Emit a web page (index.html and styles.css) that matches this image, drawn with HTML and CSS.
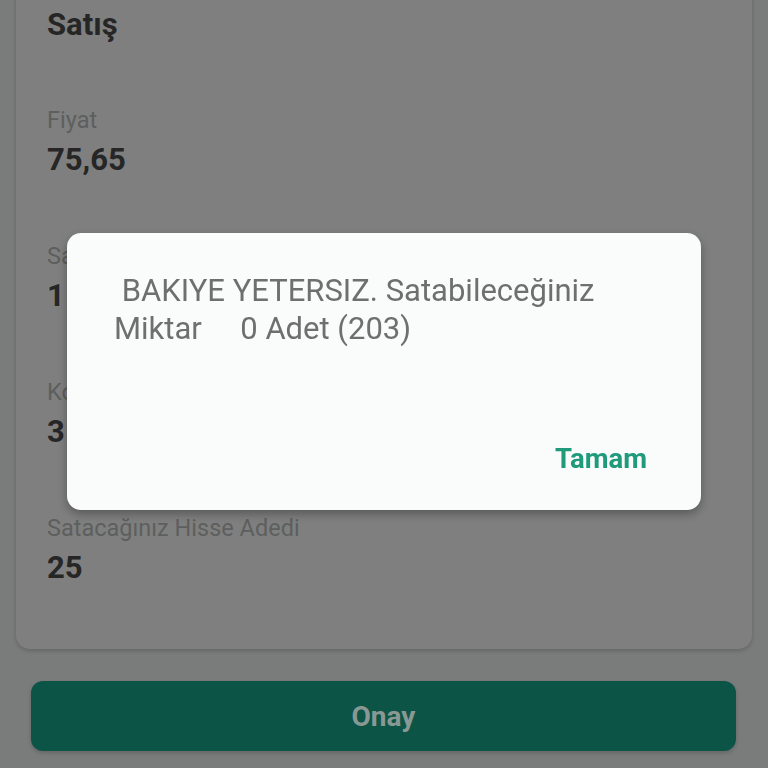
FILE: index.html
```html
<!DOCTYPE html>
<html lang="tr">
<head>
<meta charset="utf-8">
<title>Satış</title>
<link rel="stylesheet" href="styles.css">
</head>
<body>
<main class="page">
  <section class="card">
    <h1 class="title">Satış</h1>
    <div class="field">
      <div class="label">Fiyat</div>
      <div class="value">75,65</div>
    </div>
    <div class="field">
      <div class="label">Satılabilir Adet</div>
      <div class="value">1</div>
    </div>
    <div class="field">
      <div class="label">Komisyon</div>
      <div class="value">3</div>
    </div>
    <div class="field">
      <div class="label">Satacağınız Hisse Adedi</div>
      <div class="value">25</div>
    </div>
  </section>
  <button class="confirm">Onay</button>
</main>
<div class="scrim">
  <div class="dialog">
    <p class="message"> BAKIYE YETERSIZ. Satabileceğiniz Miktar     0 Adet (203)</p>
    <div class="actions"><button class="ok">Tamam</button></div>
  </div>
</div>
</body>
</html>
```
FILE: styles.css
```css
* { box-sizing: border-box; }
html, body { margin: 0; padding: 0; }
body {
  background: #7a7c7b;
  font-family: Roboto, "Noto Sans", "Liberation Sans", sans-serif;
  height: 768px;
  overflow: hidden;
}
.page {
  padding: 0 16px;
  margin-top: -24px;
  display: flex;
  flex-direction: column;
}
.card {
  background: #7f7f7f;
  border-radius: 14px;
  padding: 29px 31px 61px;
  box-shadow: 0 2px 4px rgba(0,0,0,0.18);
}
.title {
  margin: 0 0 61px;
  font-size: 31px;
  line-height: 40px;
  font-weight: 700;
  color: #262626;
}
.field { margin-bottom: 62px; }
.field:last-child { margin-bottom: 0; }
.label {
  font-size: 23.5px;
  line-height: 28px;
  color: #5d5f5e;
  margin-bottom: 6px;
}
.value {
  font-size: 31px;
  line-height: 40px;
  font-weight: 700;
  color: #262626;
}
.confirm {
  margin: 32px 16px 0 15px;
  height: 70px;
  border: 0;
  border-radius: 12px;
  background: #0c5446;
  color: #8a9893;
  font-family: inherit;
  font-size: 28px;
  font-weight: 700;
  box-shadow: 0 2px 4px rgba(0,0,0,0.18);
}
.scrim {
  position: fixed;
  inset: 0;
  display: flex;
  align-items: center;
  justify-content: center;
  padding-bottom: 25px;
}
.dialog {
  width: 634px;
  background: #fafcfb;
  border-radius: 14px;
  padding: 39px 40px 33px 47px;
  box-shadow: 0 4px 10px rgba(0,0,0,0.3);
}
.message {
  margin: 0;
  white-space: pre-wrap;
  font-size: 31px;
  line-height: 38px;
  color: #6e706f;
}
.actions {
  display: flex;
  justify-content: flex-end;
  margin-top: 93px;
  margin-right: 14px;
}
.ok {
  border: 0;
  background: none;
  padding: 0;
  font-family: inherit;
  font-size: 27.5px;
  line-height: 36px;
  font-weight: 700;
  color: #1f9b7c;
}
```
